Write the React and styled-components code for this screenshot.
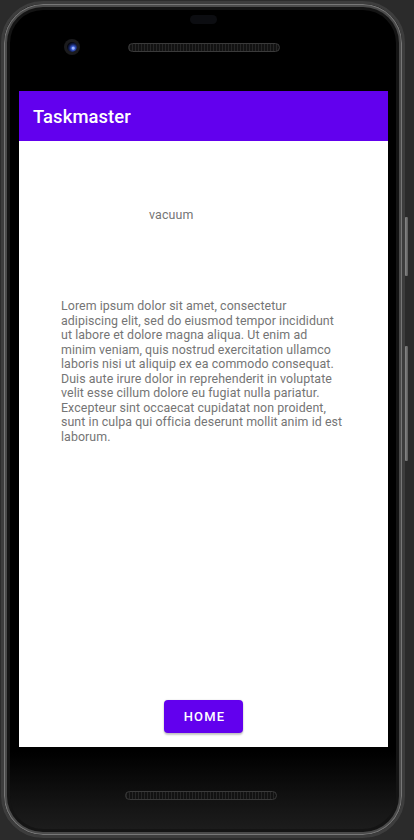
import React from "react";
import styled, { createGlobalStyle } from "styled-components";

const Global = createGlobalStyle`
  html, body {
    margin: 0;
    padding: 0;
    width: 414px;
    height: 840px;
    overflow: hidden;
    background: #2b2b2b;
    font-family: Roboto, "Noto Sans", "Liberation Sans", sans-serif;
  }
  * { box-sizing: border-box; }
`;

const Stage = styled.div`
  width: 414px;
  height: 840px;
  padding: 1px 0 0 1px;
`;

const Phone = styled.div`
  position: relative;
  width: 404px;
  height: 837px;
  border-radius: 42px;
  border: 3px solid #3d3d3d;
  background: linear-gradient(to bottom, #000 0%, #000 90%, #161616 97%, #1e1e1e 100%);
  box-shadow: inset 0 0 0 1px #777, inset 0 0 0 3px #4a4a4a, inset 0 0 0 6px #141414;
  display: flex;
  flex-direction: column;
  padding: 0 14px 0 15px;
`;

const SideButton = styled.div`
  position: absolute;
  right: -6px;
  top: ${(p) => p.$top}px;
  width: 3px;
  height: ${(p) => p.$h}px;
  border-radius: 1px;
  background: linear-gradient(to right, #8a8a8a, #5a5a5a);
`;

const TopBezel = styled.div`
  height: 87px;
  display: flex;
  flex-direction: column;
  align-items: center;
`;

const Notch = styled.div`
  margin-top: 11px;
  width: 27px;
  height: 9px;
  border-radius: 5px;
  background: #0c0d11;
`;

const SensorRow = styled.div`
  align-self: stretch;
  margin-top: 15px;
  display: flex;
  align-items: center;
  padding-left: 45px;
  gap: 48px;
`;

const Camera = styled.div`
  width: 16px;
  height: 16px;
  border-radius: 50%;
  background: #1b1b1d;
  display: flex;
  align-items: center;
  justify-content: center;
`;

const Lens = styled.div`
  width: 10px;
  height: 10px;
  border-radius: 50%;
  background: radial-gradient(circle at 62% 62%, #9fb6ff 0 1px, #3656c8 2px, #142056 4px, #05060d 6px);
`;

const Speaker = styled.div`
  width: 152px;
  height: 9px;
  border-radius: 5px;
  border: 1px solid #3a3a3a;
  background: repeating-linear-gradient(90deg, #262626 0 1px, #121212 1px 3px);
  margin-left: ${(p) => p.$ml || 0}px;
`;

const Screen = styled.div`
  width: 369px;
  height: 656px;
  background: #fff;
  display: flex;
  flex-direction: column;
`;

const AppBar = styled.div`
  height: 50px;
  background: #6200ee;
  display: flex;
  align-items: center;
  padding-left: 14px;
`;

const Title = styled.h1`
  margin: 0;
  color: #fff;
  font-size: 18.4px;
  font-weight: 500;
  letter-spacing: 0.1px;
`;

const Content = styled.div`
  flex: 1;
  display: flex;
  flex-direction: column;
`;

const Body = styled.p`
  margin: 0;
  color: #757575;
  font-size: 12.4px;
  letter-spacing: 0.07px;
  line-height: 14.45px;
`;

const Label = styled(Body)`
  margin: 67px 0 0 130px;
  letter-spacing: 0.15px;
`;

const Paragraph = styled(Body)`
  margin: 77px 0 0 42px;
  width: 284px;
`;

const Spacer = styled.div`
  flex: 1;
`;

const HomeButton = styled.button`
  align-self: center;
  margin-bottom: 14px;
  height: 33px;
  padding: 0 18px 0 20px;
  border: none;
  border-radius: 4px;
  background: #6200ee;
  color: #fff;
  font-family: Roboto, "Noto Sans", sans-serif;
  font-size: 13px;
  font-weight: 500;
  letter-spacing: 1.2px;
  text-transform: uppercase;
  box-shadow: 0 2px 2px rgba(0, 0, 0, 0.22), 0 0 2px rgba(0, 0, 0, 0.14);
`;

const BottomBezel = styled.div`
  flex: 1;
  display: flex;
  flex-direction: column;
  padding-top: 44px;
`;

const lorem =
  "Lorem ipsum dolor sit amet, consectetur adipiscing elit, sed do eiusmod tempor incididunt ut labore et dolore magna aliqua. Ut enim ad minim veniam, quis nostrud exercitation ullamco laboris nisi ut aliquip ex ea commodo consequat. Duis aute irure dolor in reprehenderit in voluptate velit esse cillum dolore eu fugiat nulla pariatur. Excepteur sint occaecat cupidatat non proident, sunt in culpa qui officia deserunt mollit anim id est laborum.";

export default function App() {
  return (
    <Stage>
      <Global />
      <Phone>
        <SideButton $top={213} $h={59} />
        <SideButton $top={342} $h={115} />
        <TopBezel>
          <Notch />
          <SensorRow>
            <Camera>
              <Lens />
            </Camera>
            <Speaker />
          </SensorRow>
        </TopBezel>
        <Screen>
          <AppBar>
            <Title>Taskmaster</Title>
          </AppBar>
          <Content>
            <Label>vacuum</Label>
            <Paragraph>{lorem}</Paragraph>
            <Spacer />
            <HomeButton>Home</HomeButton>
          </Content>
        </Screen>
        <BottomBezel>
          <Speaker $ml={106} />
        </BottomBezel>
      </Phone>
    </Stage>
  );
}
